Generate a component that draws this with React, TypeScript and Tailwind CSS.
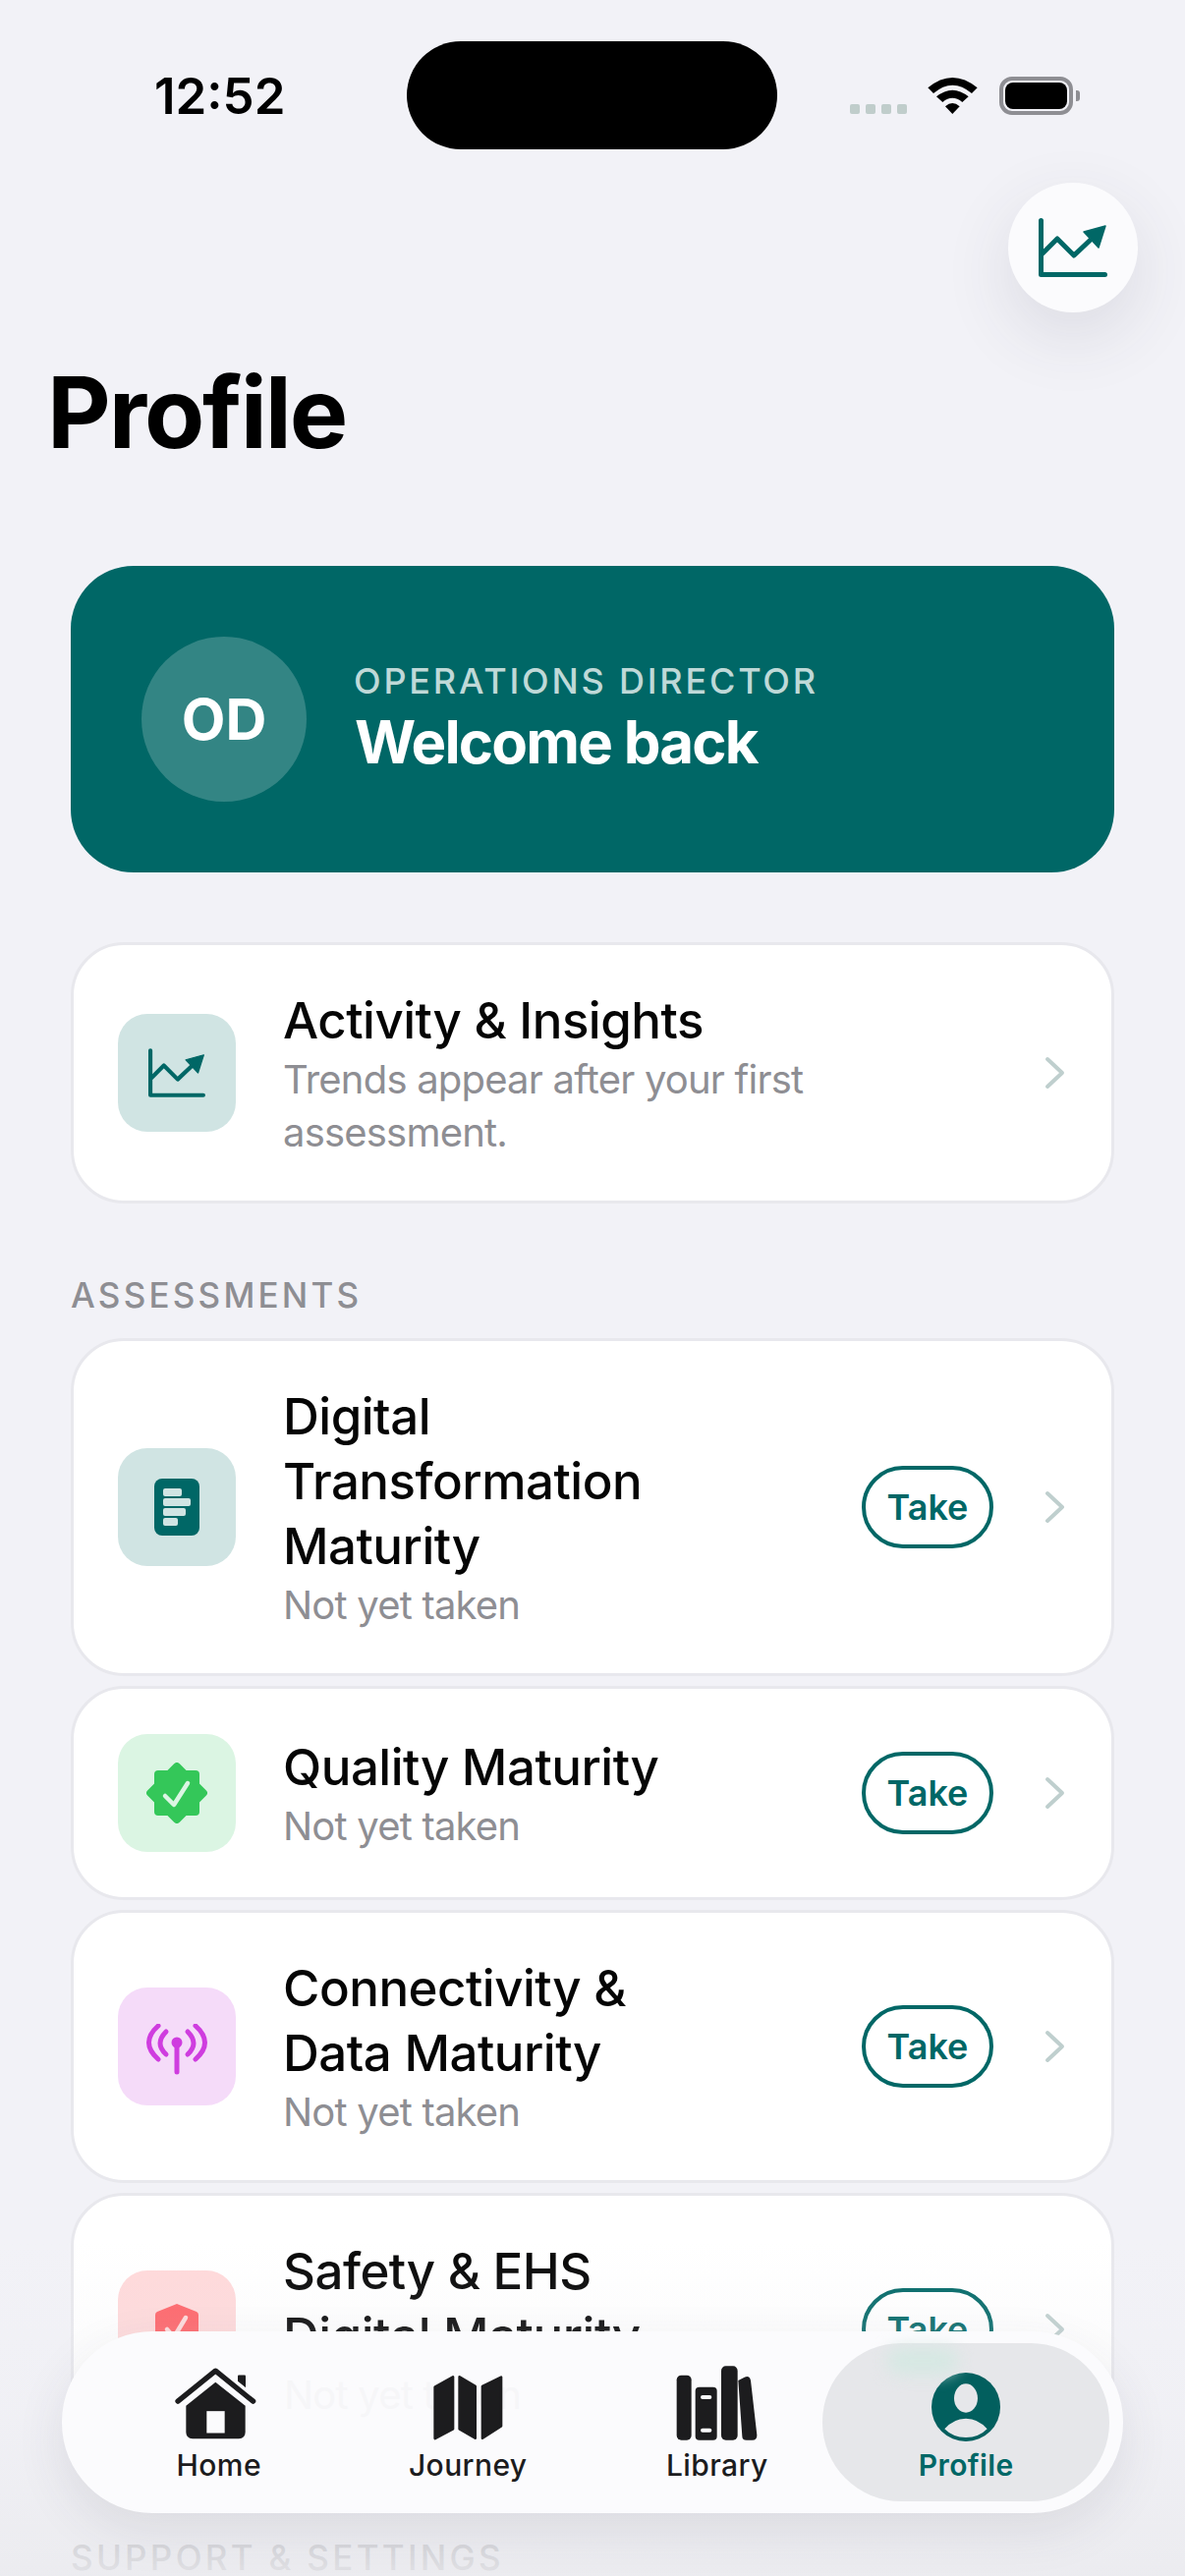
import type { ReactNode } from "react";

const font = { fontFamily: "Inter, 'Noto Sans', sans-serif" };

function ChartIcon({ className }: { className: string }) {
  return (
    <svg viewBox="0 0 70 60" className={className} fill="none">
      <path d="M2.5 2.5V57.5H67.5" stroke="currentColor" strokeWidth="5" strokeLinecap="round" strokeLinejoin="round" />
      <path d="M4 36L19 21L36 38L55 20" stroke="currentColor" strokeWidth="5" strokeLinecap="round" strokeLinejoin="round" />
      <path d="M46 14L68 8L61 30Z" fill="currentColor" stroke="currentColor" strokeWidth="1.5" strokeLinejoin="round" />
    </svg>
  );
}

function DocIcon() {
  return (
    <svg viewBox="0 0 46 58" className="w-[46px] h-[58px]">
      <rect width="46" height="58" rx="8" fill="#006766" />
      <rect x="9" y="10" width="19" height="8" rx="2" fill="#d0e4e3" />
      <rect x="9" y="20" width="28" height="8" rx="2" fill="#d0e4e3" />
      <rect x="9" y="30" width="23" height="8" rx="2" fill="#d0e4e3" />
      <rect x="9" y="40" width="15" height="8" rx="2" fill="#d0e4e3" />
    </svg>
  );
}

function BadgeIcon() {
  return (
    <svg viewBox="-31 -31 62 62" className="w-[62px] h-[62px]">
      <rect x="-23" y="-23" width="46" height="46" rx="4" fill="#34c759" />
      <rect x="-23" y="-23" width="46" height="46" rx="4" fill="#34c759" transform="rotate(45)" />
      <path d="M-12 3L-3 12L11 -10" fill="none" stroke="#dbf5e3" strokeWidth="4.5" strokeLinecap="round" strokeLinejoin="round" />
    </svg>
  );
}

function AntennaIcon() {
  return (
    <svg viewBox="0 0 64 52" className="w-[64px] h-[52px] mt-[6px]" fill="none" stroke="#cf3ddf" strokeWidth="5" strokeLinecap="round">
      <path d="M21 8Q9 20 21 31" />
      <path d="M13 2Q-6 19 13 36" />
      <path d="M43 8Q55 20 43 31" />
      <path d="M51 2Q70 19 51 36" />
      <circle cx="32" cy="19" r="5.5" fill="#cf3ddf" stroke="none" />
      <path d="M32 20V49" />
    </svg>
  );
}

function ShieldIcon() {
  return (
    <svg viewBox="0 0 44 52" className="w-[44px] h-[52px]">
      <path d="M22 0L42 8Q44 9 44 11V28Q44 42 22 52Q0 42 0 28V11Q0 9 2 8Z" fill="#ff6166" />
      <path d="M12 26L19 34L31 14" fill="none" stroke="#ffd9da" strokeWidth="4.5" strokeLinecap="round" strokeLinejoin="round" />
    </svg>
  );
}

function Chevron() {
  return (
    <svg viewBox="0 0 22 34" className="w-[22px] h-[34px] shrink-0" fill="none">
      <path d="M3 3L18 17L3 31" stroke="#bfcfce" strokeWidth="4" strokeLinecap="round" strokeLinejoin="round" />
    </svg>
  );
}

function Row({
  tile,
  icon,
  title,
  sub,
  take = true,
}: {
  tile: string;
  icon: ReactNode;
  title: ReactNode;
  sub: ReactNode;
  take?: boolean;
}) {
  return (
    <div className="bg-white border-[3px] border-[#e8e8ed] rounded-[54px] flex items-center min-h-[218px] py-[42px] pl-[45px] pr-[46px]">
      <div className={`${tile} w-[120px] h-[120px] rounded-[30px] shrink-0 flex items-center justify-center`}>{icon}</div>
      <div className="flex-1 min-w-0 ml-[48px] pt-[2px]">
        <div className="text-[51px] leading-[66px] font-[550] text-[#050505] tracking-[-0.5px]">{title}</div>
        <div className="text-[40px] leading-[54px] text-[#8e8e93] tracking-[-0.8px]">{sub}</div>
      </div>
      {take && (
        <div className="w-[134px] h-[84px] rounded-[42px] border-[4px] border-[#006766] flex items-center justify-center text-[36px] font-semibold text-[#006766] shrink-0 mr-[52px]">
          Take
        </div>
      )}
      <Chevron />
    </div>
  );
}

function NavItem({ label, icon, active }: { label: string; icon: ReactNode; active?: boolean }) {
  return (
    <div className="relative flex flex-col items-center">
      {active && (
        <div className="absolute top-[12px] left-1/2 -translate-x-1/2 w-[292px] h-[161px] rounded-[80px] bg-[#e6e7ea]" />
      )}
      <div className="relative h-[112px] flex items-end justify-center">{icon}</div>
      <div
        className={`relative mt-[5px] text-[30px] leading-[38px] font-medium tracking-[0.4px] ${
          active ? "text-[#006766] font-semibold" : "text-[#1c1c1e]"
        }`}
      >
        {label}
      </div>
    </div>
  );
}

export default function App() {
  return (
    <div style={font} className="relative w-[1206px] h-[2622px] overflow-hidden bg-[#f2f2f7]">
      {/* status bar */}
      <div className="flex pt-[42px] h-[152px]">
        <div className="w-[414px] pl-[157px] pt-[29px] text-[51px] leading-[54px] font-semibold text-black">
          12:52
        </div>
        <div className="w-[377px] h-[110px] rounded-[55px] bg-black" />
        <div className="flex-1 flex items-start pl-[74px] pt-[36px]">
          <div className="flex gap-[6px] mt-[28px]">
            <div className="w-[10px] h-[10px] rounded-[2px] bg-[#c0cdcb]" />
            <div className="w-[10px] h-[10px] rounded-[2px] bg-[#c0cdcb]" />
            <div className="w-[10px] h-[10px] rounded-[2px] bg-[#c0cdcb]" />
            <div className="w-[10px] h-[10px] rounded-[2px] bg-[#c0cdcb]" />
          </div>
          <svg viewBox="316 117 151 111" className="w-[51px] h-[37px] ml-[21px] mt-[1px]">
            <path d="M316 148Q391 86 467 148L450 165Q391 115 333 165Z" />
            <path d="M342 175Q391 135 440 175L421 192Q391 167 361 192Z" />
            <path d="M369 205Q391 185 413 205L391 228Z" />
          </svg>
          <div className="ml-[22px] w-[75px] h-[39px] rounded-[13px] border-[4px] border-[#8e8e93] p-[2px]">
            <div className="w-full h-full rounded-[8px] bg-black" />
          </div>
          <div className="ml-[3px] mt-[14px] w-[4px] h-[11px] rounded-r-[3px] bg-[#8e8e93]" />
        </div>
      </div>

      {/* floating insights button */}
      <div className="absolute left-[1026px] top-[186px] w-[132px] h-[132px] rounded-full bg-[#fbfbfd] shadow-[0_24px_70px_rgba(60,60,80,0.12)] flex items-center justify-center text-[#006766]">
        <ChartIcon className="w-[70px] h-[60px]" />
      </div>

      <h1 className="mt-[218px] pl-[48px] text-[100px] leading-[100px] font-bold text-black tracking-[-2.1px]">Profile</h1>

      <main className="px-[72px] mt-[106px]">
        <div className="bg-[#006766] rounded-[64px] h-[312px] flex items-center pl-[72px]">
          <div className="w-[168px] h-[168px] rounded-full bg-white/20 flex items-center justify-center text-[58px] font-bold text-white">
            OD
          </div>
          <div className="ml-[48px]">
            <div className="text-[36px] leading-[44px] font-medium text-white/75 tracking-[2.8px] mt-[-2px]">OPERATIONS DIRECTOR</div>
            <div className="text-[60px] leading-[72px] font-bold text-white tracking-[-1.8px] mt-[4px] ml-[1px]">Welcome back</div>
          </div>
        </div>

        <div className="mt-[71px]">
          <Row
            tile="bg-[#d0e4e3]"
            icon={<ChartIcon className="w-[58px] h-[50px] text-[#006766]" />}
            title="Activity & Insights"
            sub={<>Trends appear after your first<br />assessment.</>}
            take={false}
          />
        </div>

        <div className="mt-[71px] mb-[22px] text-[35px] leading-[44px] font-medium text-[#8e8e93] tracking-[3.2px]">ASSESSMENTS</div>

        <div className="flex flex-col gap-[10px]">
          <Row
            tile="bg-[#d0e4e3]"
            icon={<DocIcon />}
            title={<>Digital<br />Transformation<br />Maturity</>}
            sub="Not yet taken"
          />
          <Row tile="bg-[#dbf5e3]" icon={<BadgeIcon />} title="Quality Maturity" sub="Not yet taken" />
          <Row
            tile="bg-[#f5dbf9]"
            icon={<AntennaIcon />}
            title={<>Connectivity &amp;<br />Data Maturity</>}
            sub="Not yet taken"
          />
          <Row
            tile="bg-[#ffd9da]"
            icon={<ShieldIcon />}
            title={<>Safety &amp; EHS<br />Digital Maturity</>}
            sub="Not yet taken"
          />
        </div>

        <div className="mt-[75px] text-[35px] leading-[36px] font-medium text-[#8e8e93] tracking-[3.3px]">SUPPORT &amp; SETTINGS</div>
      </main>

      {/* fade behind tab bar */}
      <div className="absolute left-0 right-0 bottom-0 h-[340px] bg-gradient-to-b from-[#ebebef]/0 via-[#ebebef]/25 to-[#ebebef]/90" />

      {/* tab bar */}
      <nav className="absolute left-[63px] top-[2373px] w-[1080px] h-[185px] rounded-[92px] bg-[#fbfbfd] shadow-[0_18px_50px_rgba(60,60,80,0.1)] px-[33px] grid grid-cols-4">
        <div aria-hidden className="absolute left-[226px] top-[38px] text-[40px] leading-[54px] tracking-[-0.8px] text-[#f6f6f8]">Not yet taken</div>
        <NavItem
          label="Home"
          icon={
            <svg viewBox="85 50 255 230" className="w-[85px] h-[77px] ml-[-6px]">
              <rect x="280" y="78" width="24" height="60" rx="3" fill="#1c1c1e" />
              <path d="M97 158L212 65L327 158" fill="none" stroke="#fbfbfd" strokeWidth="36" strokeLinecap="round" strokeLinejoin="round" />
              <path d="M97 158L212 65L327 158" fill="none" stroke="#1c1c1e" strokeWidth="16" strokeLinecap="round" strokeLinejoin="round" />
              <path d="M122 172L212 100L303 172V252Q303 272 283 272H142Q122 272 122 252Z" fill="#1c1c1e" />
              <rect x="185" y="188" width="55" height="67" fill="#fbfbfd" />
            </svg>
          }
        />
        <NavItem
          label="Journey"
          icon={
            <svg viewBox="865 60 222 207" className="w-[74px] h-[69px]">
              <g fill="#1c1c1e" stroke="#1c1c1e" strokeWidth="8" strokeLinejoin="round">
                <path d="M931 70V229L876 258V101Z" />
                <path d="M951 70L999 99V257L951 229Z" />
                <path d="M1021 99L1078 71V220L1021 257Z" />
              </g>
            </svg>
          }
        />
        <NavItem
          label="Library"
          icon={
            <svg viewBox="140 44 255 234" className="w-[85px] h-[78px]">
              <g fill="#1c1c1e">
                <rect x="145" y="76" width="45" height="198" rx="14" />
                <rect x="202" y="112" width="66" height="162" rx="12" />
                <rect x="281" y="48" width="50" height="226" rx="14" />
                <path d="M333 92L352 82Q368 76 371 92L390 258Q391 274 376 274H358Q345 274 345 262Z" />
              </g>
              <rect x="218" y="137" width="34" height="12" rx="6" fill="#fbfbfd" />
              <rect x="218" y="238" width="34" height="12" rx="6" fill="#fbfbfd" />
            </svg>
          }
        />
        <NavItem
          label="Profile"
          active
          icon={
            <svg viewBox="923 60 210 210" className="w-[70px] h-[70px]">
              <circle cx="1028" cy="165" r="105" fill="#025f5e" />
              <ellipse cx="1028" cy="138" rx="36" ry="44" fill="#e6e7ea" />
              <path d="M963 232Q990 200 1028 200Q1066 200 1093 232Q1068 258 1028 258Q988 258 963 232Z" fill="#e6e7ea" />
            </svg>
          }
        />
        <div className="absolute left-[840px] top-[16px] w-[72px] h-[28px] rounded-full bg-[#d6e8e3] blur-[8px]" />
      </nav>
    </div>
  );
}
